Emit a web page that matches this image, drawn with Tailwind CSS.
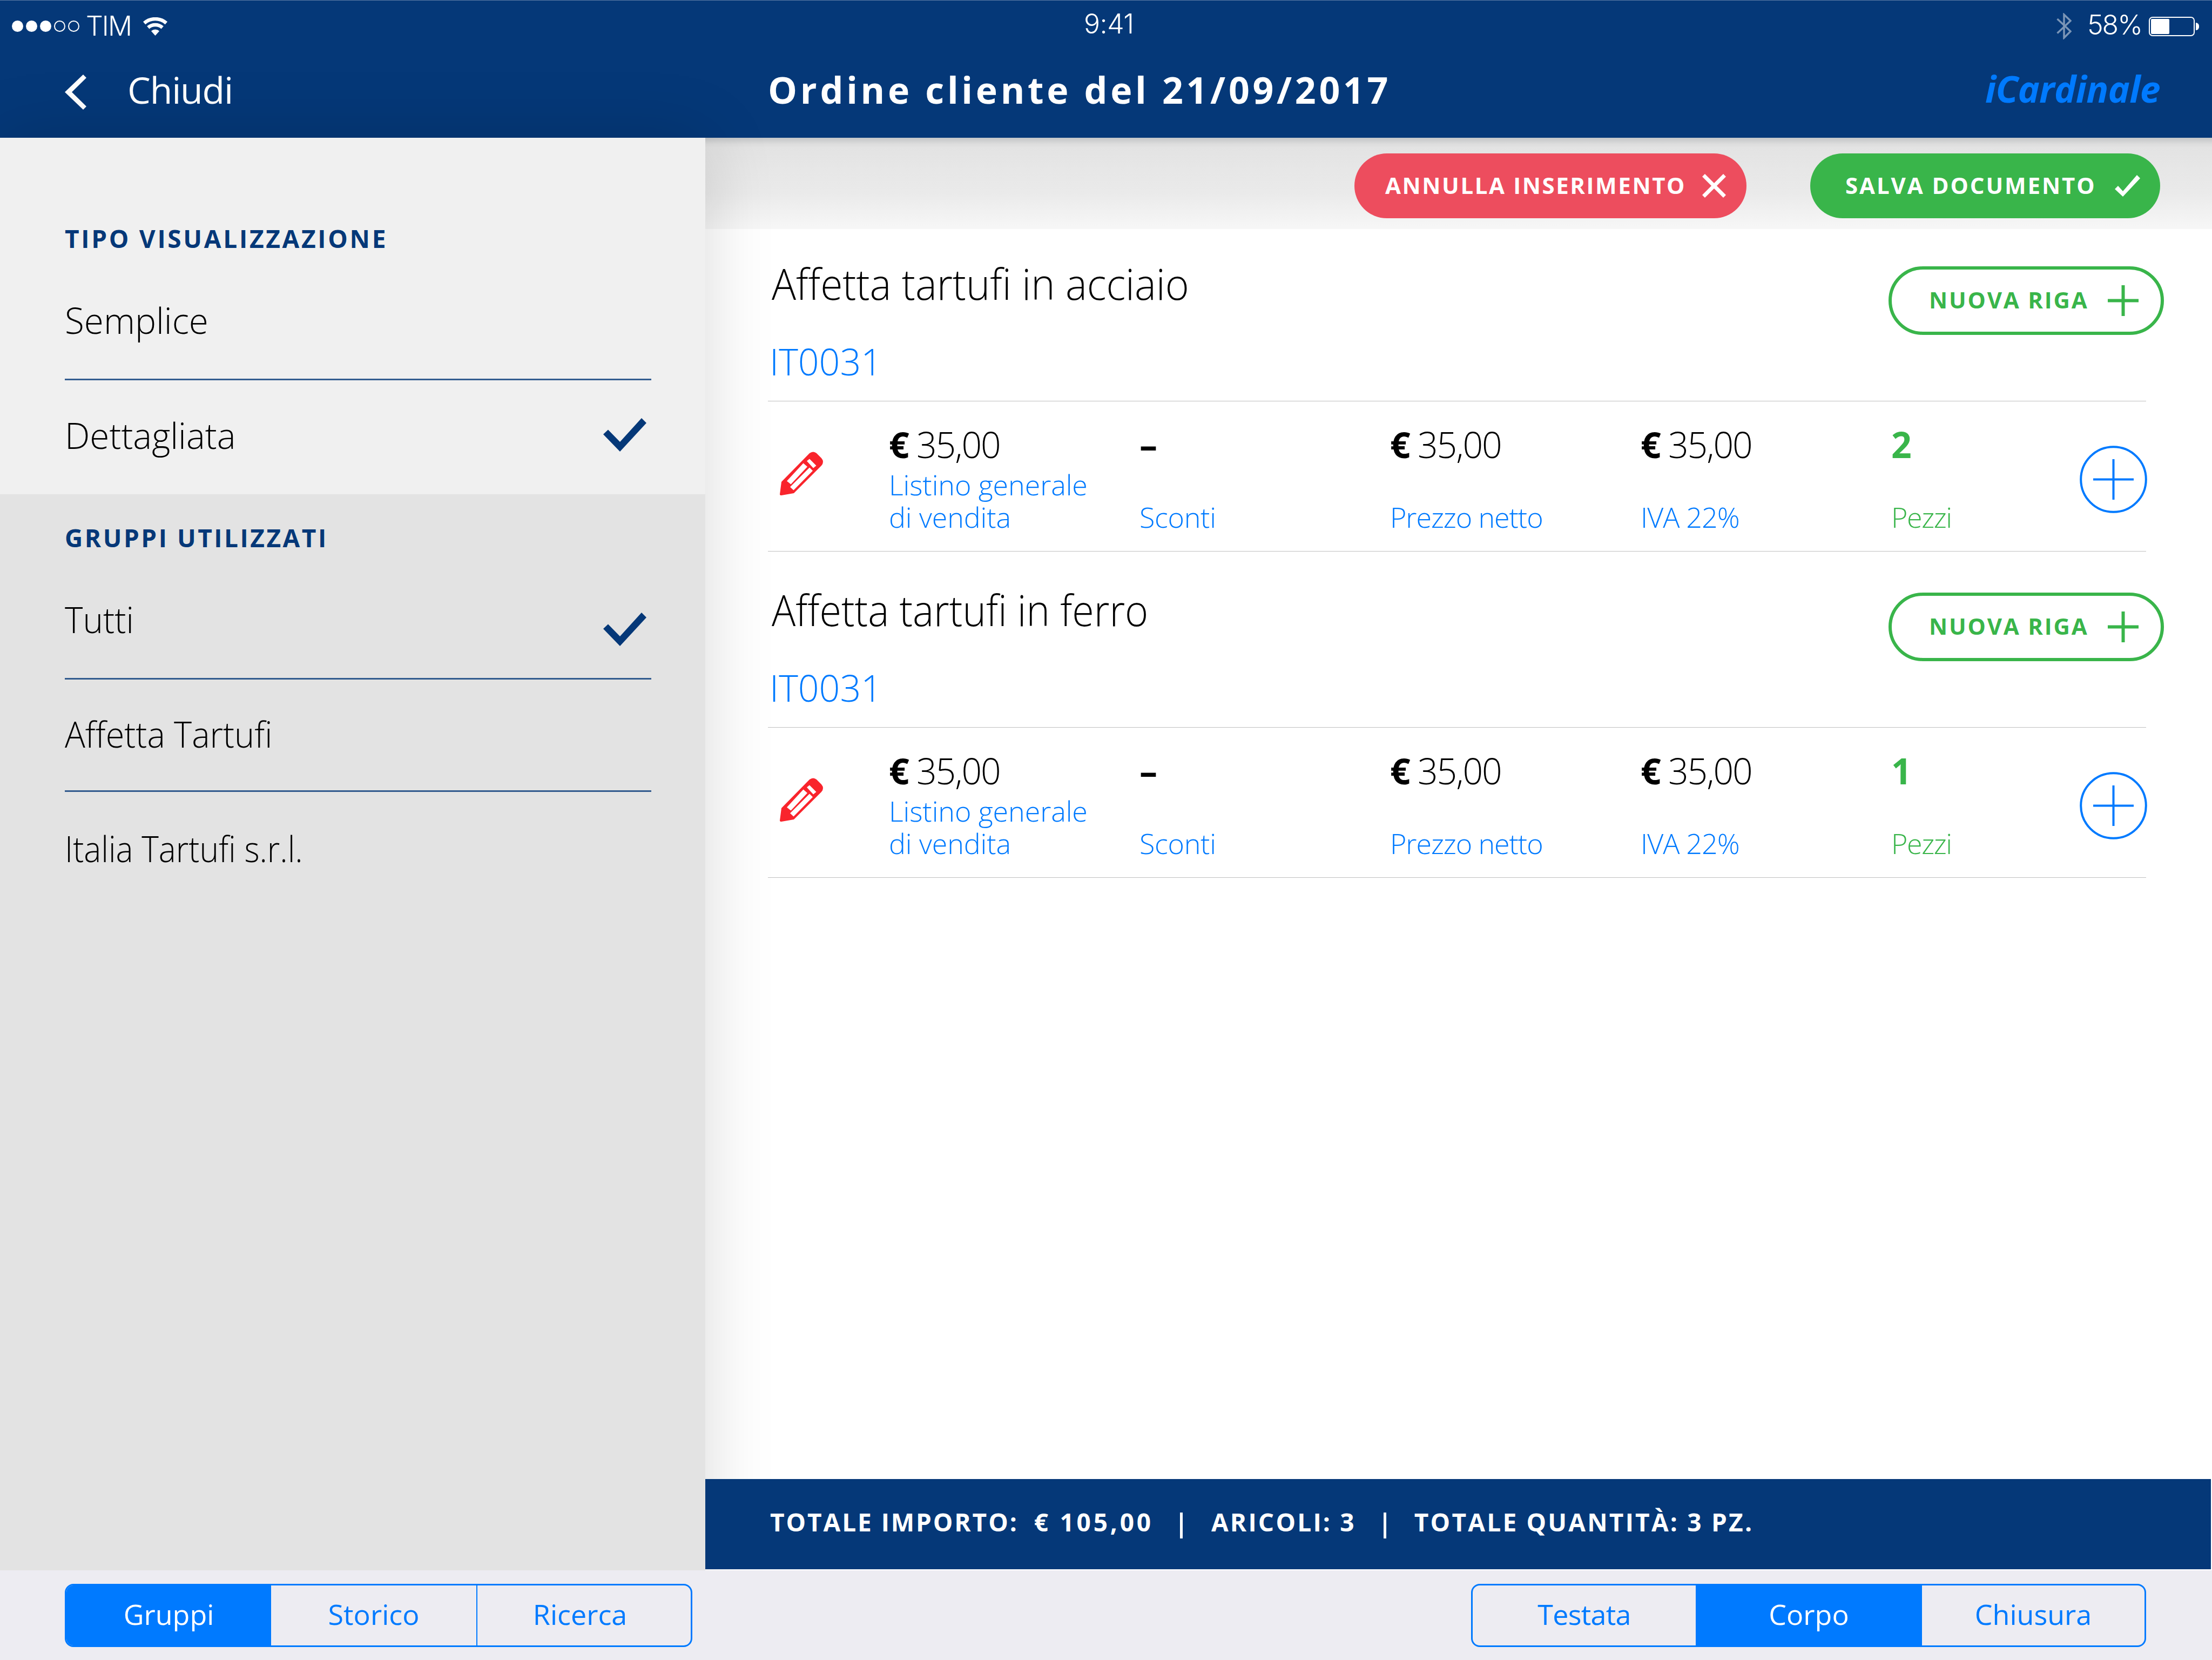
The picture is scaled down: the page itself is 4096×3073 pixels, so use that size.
<!DOCTYPE html>
<html lang="it">
<head>
    <meta charset="UTF-8">
    <meta name="viewport" content="width=device-width, initial-scale=1.0">
    <title>iCardinale - Ordine cliente</title>
    <script src="https://cdn.jsdelivr.net/npm/@tailwindcss/browser@4"></script>
</head>
<body class="flex flex-col w-[4096px] h-[3073px] overflow-hidden bg-white text-black font-['Open_Sans',sans-serif] whitespace-nowrap">

    <!-- Shared icons -->
    <svg class="hidden">
        <symbol id="check" viewBox="0 0 80 62"><path d="M0 30L9 21.5L31 44L71 0L80 9L31 62Z" fill="currentColor"/></symbol>
        <symbol id="plus" viewBox="0 0 57 57"><path d="M28.5 0V57M0 28.5H57" stroke="currentColor" stroke-width="6"/></symbol>
        <symbol id="plus-circle" viewBox="0 0 125 125">
            <circle cx="62.5" cy="62.5" r="60.3" fill="none" stroke="currentColor" stroke-width="4"/>
            <path d="M62.5 25V100M25 62.5H100" stroke="currentColor" stroke-width="4"/>
        </symbol>
        <symbol id="pencil" viewBox="0 0 80 81">
            <path fill="currentColor" fill-rule="evenodd" d="M0 79L3 56L55 3Q62 -2 68 3L77 12Q83 19 77 26L26 77L3 81Q0 81 0 79ZM50 17.5L62 30.5L67.5 26L55 13.5ZM13 54.5L20.5 60.5L51 28L43.5 21.5ZM19 65.5L25.5 71.5L61 35.5L55 29.5Z"/>
        </symbol>
    </svg>

    <header class="h-[255px] shrink-0 bg-[#053878] border-t border-[#5a7ba5] text-white">
        <!-- Status bar -->
        <div class="flex items-center h-[95px] font-['Inter',sans-serif] font-light text-[50px]">
            <div class="flex items-center w-[2007px] pl-[22px]">
                <div class="flex gap-[5px]">
                    <span class="size-[21px] rounded-full bg-white"></span>
                    <span class="size-[21px] rounded-full bg-white"></span>
                    <span class="size-[21px] rounded-full bg-white"></span>
                    <span class="size-[21px] rounded-full border-2 border-white"></span>
                    <span class="size-[21px] rounded-full border-2 border-white"></span>
                </div>
                <span class="ml-[12px] tracking-[-2px]">TIM</span>
                <svg class="ml-[22px] w-[45px] h-[34px]" viewBox="0 0 45 34" fill="none" stroke="white" stroke-width="6.5">
                    <path d="M2.1 10.7A31 31 0 0 1 42.9 10.7"/>
                    <path d="M9.3 19A20 20 0 0 1 35.7 19"/>
                    <path d="M22.5 34L14.9 25.4A11.5 11.5 0 0 1 30.1 25.4Z" fill="white" stroke="none"/>
                </svg>
            </div>
            <span class="pb-2 tracking-[-0.5px]">9:41</span>
            <div class="flex items-center ml-auto pr-[24px]">
                <svg class="w-[28px] h-[49px] text-[#7b95b6]" viewBox="0 0 28 49" fill="none" stroke="currentColor" stroke-width="3.5">
                    <path d="M1.5 11L26 34L14 46V3L26 14.5L1.5 37.5"/>
                </svg>
                <span class="ml-[29px] pb-1 tracking-[-2px]">58%</span>
                <div class="ml-[13px] w-[85px] h-[36px] border-[2.5px] border-white rounded-[7px] p-[2px]">
                    <div class="w-[34px] h-full rounded-[2px] bg-white"></div>
                </div>
                <div class="ml-[2px] w-[6px] h-[14px] rounded-r-full bg-white"></div>
            </div>
        </div>
        <!-- Navigation -->
        <div class="flex items-center h-[140px] text-[68px] leading-[100px]">
            <div class="flex items-center w-[1306px] pl-[120px]">
                <svg class="w-[40px] h-[65px] mt-[9px]" viewBox="0 0 40 65"><path d="M34 0L40 6L13 32.5L40 59L34 65L0 32.5Z" fill="white"/></svg>
                <span class="ml-[76px] tracking-[-1.2px]">Chiudi</span>
            </div>
            <h1 class="ml-[116px] font-bold tracking-[5.7px]">Ordine cliente del 21/09/2017</h1>
            <span class="ml-auto mr-[96px] pb-1 font-bold italic tracking-[-0.7px] text-[#007aff]">iCardinale</span>
        </div>
    </header>

    <div class="flex h-[2652px] shrink-0">
        <aside class="relative w-[1306px] shrink-0 bg-[#e3e3e3] text-[67px] font-light shadow-[0_0_120px_rgba(0,0,0,0.15)]">
            <section class="h-[660px] pl-[120px] pr-[100px] pt-[156px] bg-[#f0f0f0]">
                <h2 class="mb-[21px] text-[46px] leading-[60px] font-bold tracking-[3.7px] text-[#053878]">TIPO VISUALIZZAZIONE</h2>
                <div class="flex items-center h-[212px] pb-[8px] border-b-3 border-[#053878]/80">
                    <span class="origin-left scale-x-[.98]">Semplice</span>
                </div>
                <div class="flex items-center justify-between h-[212px] pb-[10px]">
                    <span class="origin-left scale-x-[.98]">Dettagliata</span>
                    <svg class="w-[80px] h-[62px] mr-[9px] text-[#053878]"><use href="#check"/></svg>
                </div>
            </section>
            <section class="pl-[120px] pr-[100px] pt-[50px]">
                <h2 class="mb-[21px] text-[46px] leading-[60px] font-bold tracking-[3.5px] text-[#053878]">GRUPPI UTILIZZATI</h2>
                <div class="flex items-center justify-between h-[212px] pb-[8px] border-b-3 border-[#053878]/80">
                    <span class="origin-left scale-x-[.95]">Tutti</span>
                    <svg class="w-[80px] h-[62px] mr-[9px] mt-[36px] text-[#053878]"><use href="#check"/></svg>
                </div>
                <div class="flex items-center h-[208px] pb-[5px] border-b-3 border-[#053878]/80">
                    <span class="origin-left scale-x-[.94]">Affetta Tartufi</span>
                </div>
                <div class="flex items-center h-[208px]">
                    <span class="origin-left scale-x-[.9]">Italia Tartufi s.r.l.</span>
                </div>
            </section>
        </aside>

        <main class="flex flex-col flex-1">
            <!-- Actions -->
            <div class="flex justify-end items-start h-[169px] pt-[29px] pr-[96px] gap-[118px] text-white text-[42px] font-bold bg-linear-[180deg,#c4c6c8_0%,#cecfd0_3%,#dddddd_7%,#e3e3e3_11%,#e6e6e6_30%,#eaeaea_60%,#f7f7f7_100%]">
                <button class="relative flex items-center justify-between w-[726px] h-[120px] pl-[57px] pr-[38px] rounded-full bg-[#ed4d5e]">
                    <span class="pb-1 tracking-[2.6px]">ANNULLA INSERIMENTO</span>
                    <svg class="size-[44px]" viewBox="0 0 44 44"><path d="M2.5 2.5L41.5 41.5M41.5 2.5L2.5 41.5" stroke="white" stroke-width="7"/></svg>
                </button>
                <button class="relative flex items-center justify-between w-[648px] h-[120px] pl-[65px] pr-[37px] rounded-full bg-[#39b54a]">
                    <span class="pb-1 tracking-[2.9px]">SALVA DOCUMENTO</span>
                    <svg class="w-[47px] h-[40px]" viewBox="0 0 47 40"><path d="M0 26L6 20L15 30L41 0L47 6L15 40Z" fill="white"/></svg>
                </button>
            </div>

            <article class="h-[604px] shrink-0 pl-[116px] pr-[122px]">
                <div class="flex justify-between h-[319px] border-b border-[#bfbfbf] font-light">
                    <div class="pt-[50px]">
                        <h3 class="ml-[7px] text-[80px] leading-[100px] origin-left scale-x-[.938]">Affetta tartufi in acciaio</h3>
                        <p class="ml-[3px] mt-[45px] text-[68px] leading-[100px] text-[#007aff]">IT0031</p>
                    </div>
                    <button class="flex items-center justify-between w-[510px] h-[127px] mt-[69px] -mr-[33px] pl-[69px] pr-[41px] rounded-full border-6 border-[#39b54a] text-[42px] font-bold tracking-[2.8px] text-[#39b54a]">
                        <span class="pb-1">NUOVA RIGA</span>
                        <svg class="size-[57px]"><use href="#plus"/></svg>
                    </button>
                </div>
                <div class="grid grid-cols-[224px_464px_464px_464px_464px_1fr_125px] h-[278px] border-b border-[#bfbfbf] font-light text-[52px] leading-[60px] text-[#007aff]">
                    <svg class="w-[80px] h-[81px] mt-[93px] ml-[22px] text-[#f9242c]"><use href="#pencil"/></svg>
                    <div class="pt-[34px]">
                        <p class="text-[66px] leading-[90px] tracking-[-2px] text-black"><b class="font-bold">€</b> 35,00</p>
                        <p class="flex items-end h-[120px] tracking-[-0.1px]">Listino generale<br>di vendita</p>
                    </div>
                    <div class="pt-[34px]">
                        <p class="text-[66px] leading-[90px] font-bold text-black">–</p>
                        <p class="flex items-end h-[120px] tracking-[-0.3px]">Sconti</p>
                    </div>
                    <div class="pt-[34px]">
                        <p class="text-[66px] leading-[90px] tracking-[-2px] text-black"><b class="font-bold">€</b> 35,00</p>
                        <p class="flex items-end h-[120px] tracking-[-1.1px]">Prezzo netto</p>
                    </div>
                    <div class="pt-[34px]">
                        <p class="text-[66px] leading-[90px] tracking-[-2px] text-black"><b class="font-bold">€</b> 35,00</p>
                        <p class="flex items-end h-[120px] tracking-[-0.9px]">IVA 22%</p>
                    </div>
                    <div class="pt-[34px] text-[#39b54a]">
                        <p class="text-[66px] leading-[90px] font-bold">2</p>
                        <p class="flex items-end h-[120px] tracking-[-1.4px]">Pezzi</p>
                    </div>
                    <svg class="size-[125px] mt-[82px] ml-[2px]"><use href="#plus-circle"/></svg>
                </div>
            </article>

            <article class="h-[604px] shrink-0 pl-[116px] pr-[122px]">
                <div class="flex justify-between h-[319px] border-b border-[#bfbfbf] font-light">
                    <div class="pt-[50px]">
                        <h3 class="ml-[7px] text-[80px] leading-[100px] origin-left scale-x-[.921]">Affetta tartufi in ferro</h3>
                        <p class="ml-[3px] mt-[45px] text-[68px] leading-[100px] text-[#007aff]">IT0031</p>
                    </div>
                    <button class="flex items-center justify-between w-[510px] h-[127px] mt-[69px] -mr-[33px] pl-[69px] pr-[41px] rounded-full border-6 border-[#39b54a] text-[42px] font-bold tracking-[2.8px] text-[#39b54a]">
                        <span class="pb-1">NUOVA RIGA</span>
                        <svg class="size-[57px]"><use href="#plus"/></svg>
                    </button>
                </div>
                <div class="grid grid-cols-[224px_464px_464px_464px_464px_1fr_125px] h-[278px] border-b border-[#bfbfbf] font-light text-[52px] leading-[60px] text-[#007aff]">
                    <svg class="w-[80px] h-[81px] mt-[93px] ml-[22px] text-[#f9242c]"><use href="#pencil"/></svg>
                    <div class="pt-[34px]">
                        <p class="text-[66px] leading-[90px] tracking-[-2px] text-black"><b class="font-bold">€</b> 35,00</p>
                        <p class="flex items-end h-[120px] tracking-[-0.1px]">Listino generale<br>di vendita</p>
                    </div>
                    <div class="pt-[34px]">
                        <p class="text-[66px] leading-[90px] font-bold text-black">–</p>
                        <p class="flex items-end h-[120px] tracking-[-0.3px]">Sconti</p>
                    </div>
                    <div class="pt-[34px]">
                        <p class="text-[66px] leading-[90px] tracking-[-2px] text-black"><b class="font-bold">€</b> 35,00</p>
                        <p class="flex items-end h-[120px] tracking-[-1.1px]">Prezzo netto</p>
                    </div>
                    <div class="pt-[34px]">
                        <p class="text-[66px] leading-[90px] tracking-[-2px] text-black"><b class="font-bold">€</b> 35,00</p>
                        <p class="flex items-end h-[120px] tracking-[-0.9px]">IVA 22%</p>
                    </div>
                    <div class="pt-[34px] text-[#39b54a]">
                        <p class="text-[66px] leading-[90px] font-bold">1</p>
                        <p class="flex items-end h-[120px] tracking-[-1.4px]">Pezzi</p>
                    </div>
                    <svg class="size-[125px] mt-[82px] ml-[2px]"><use href="#plus-circle"/></svg>
                </div>
            </article>

            <!-- Totals -->
            <div class="relative flex items-center h-[167px] mt-auto mb-[2px] mr-[2px] pl-[120px] pb-2 bg-[#053878] text-white text-[46px] font-bold tracking-[3.2px]">
                <span class="tracking-[2.9px]">TOTALE IMPORTO:</span>
                <span class="ml-[29px] tracking-[4.8px]">€ 105,00</span>
                <span class="w-[5px] h-[48px] mt-[12px] ml-[49px] mr-[53px] bg-white"></span>
                <span>ARICOLI: 3</span>
                <span class="w-[5px] h-[48px] mt-[12px] ml-[51px] mr-[52px] bg-white"></span>
                <span>TOTALE QUANTITÀ: 3 PZ.</span>
            </div>
        </main>
    </div>

    <footer class="relative flex items-center justify-between flex-1 pl-[120px] pr-[122px] bg-[#edecf2] text-[52px] leading-[70px] text-[#007aff]">
        <div class="flex w-[1162px] h-[117px] rounded-[16px] border-3 border-[#007aff] overflow-hidden">
            <button class="w-[379px] pb-1 bg-[#007aff] text-white">Gruppi</button>
            <button class="w-[382px] pb-1 border-r-2 border-[#007aff]">Storico</button>
            <button class="w-[380px] pb-1">Ricerca</button>
        </div>
        <div class="flex w-[1250px] h-[117px] rounded-[16px] border-3 border-[#007aff] overflow-hidden">
            <button class="w-[413px] pb-1 tracking-[-0.7px]">Testata</button>
            <button class="w-[419px] pb-1 bg-[#007aff] text-white">Corpo</button>
            <button class="flex-1 pb-1">Chiusura</button>
        </div>
    </footer>
</body>
</html>
